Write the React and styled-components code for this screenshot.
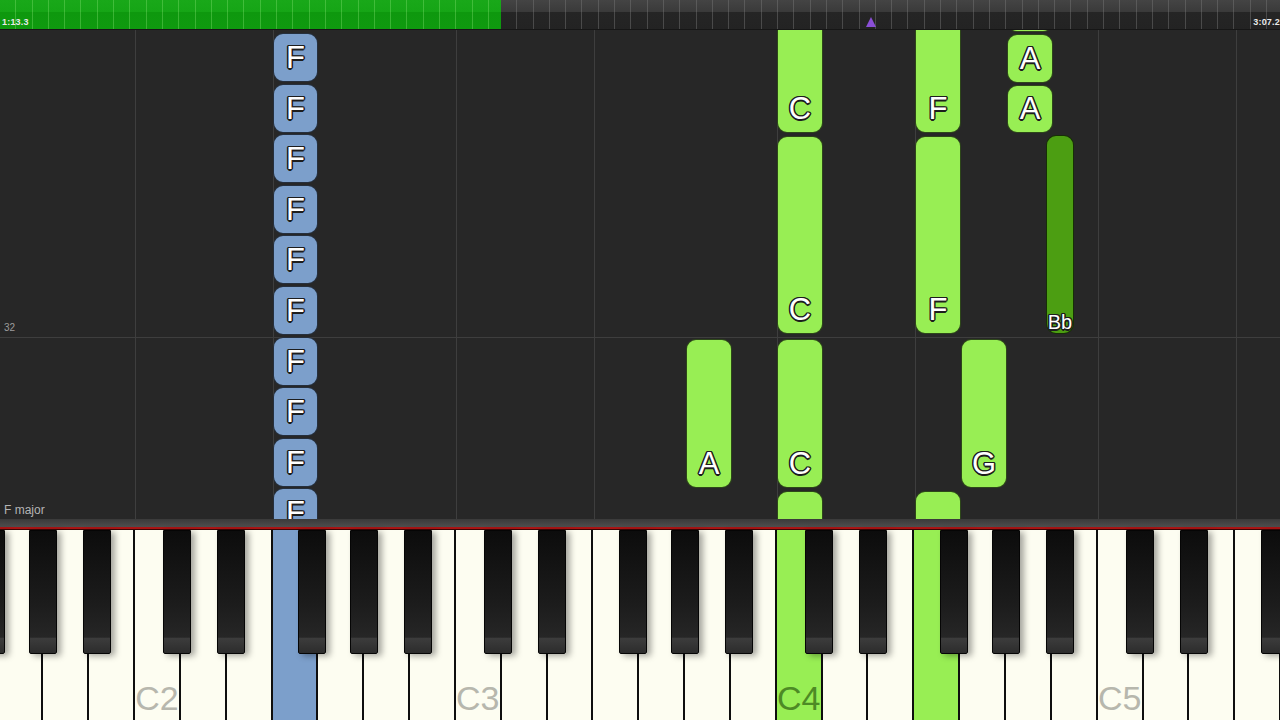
import React from 'react'
import styled, { createGlobalStyle } from 'styled-components'

const W = 321 / 7
const C2 = 135
const KEY_START = C2 - 3 * W
const octaveX = (n) => C2 + (n - 2) * 321
const BLACK_OFFSETS = [28, 82, 163, 215, 269]

const WHITE_NAMES = ['C', 'D', 'E', 'F', 'G', 'A', 'B']

const GREEN = '#98ee54'
const BLUE = '#7c9fcb'
const DARK_GREEN = '#4c9e12'

const whiteKeys = []
{
    // G1 .. F5
    let idx = 4
    let oct = 1
    for (let i = 0; i < 28; i++) {
        const name = WHITE_NAMES[idx] + oct
        whiteKeys.push(name)
        idx++
        if (idx === 7) {
            idx = 0
            oct++
        }
    }
}

const highlights = { F2: BLUE, C4: GREEN, F4: GREEN }
const labelled = { C2: 1, C3: 1, C4: 1, C5: 1 }

const blackKeys = []
for (let n = 1; n <= 5; n++) {
    BLACK_OFFSETS.forEach((o) => {
        const x = octaveX(n) + o
        if (x > -30 && x < 1280) blackKeys.push(x)
    })
}

const fStep = 50.6
const notes = [
    ...Array.from({ length: 10 }, (_, i) => ({
        x: 273, w: 45, top: 33 + i * fStep, h: 49, color: BLUE, label: 'F',
    })),
    { x: 777, w: 46, top: -20, h: 153, color: GREEN, label: 'C' },
    { x: 777, w: 46, top: 136, h: 198, color: GREEN, label: 'C' },
    { x: 777, w: 46, top: 339, h: 149, color: GREEN, label: 'C' },
    { x: 777, w: 46, top: 491, h: 80, color: GREEN },
    { x: 915, w: 46, top: -20, h: 153, color: GREEN, label: 'F' },
    { x: 915, w: 46, top: 136, h: 198, color: GREEN, label: 'F' },
    { x: 915, w: 46, top: 491, h: 80, color: GREEN },
    { x: 686, w: 46, top: 339, h: 149, color: GREEN, label: 'A' },
    { x: 961, w: 46, top: 339, h: 149, color: GREEN, label: 'G' },
    { x: 1007, w: 46, top: -20, h: 52, color: GREEN },
    { x: 1007, w: 46, top: 34, h: 49, color: GREEN, label: 'A' },
    { x: 1007, w: 46, top: 85, h: 48, color: GREEN, label: 'A' },
    { x: 1046, w: 28, top: 135, h: 199, color: DARK_GREEN, label: 'Bb', small: true },
]

const gridXs = [135, 273, 456, 594, 777, 915, 1098, 1236]

const App = () => {
    return (
        <>
            <GlobalStyle />
            <Screen>
                <TopBar>
                    <Progress />
                    <Remaining />
                    <TimeLabel>1:13.3</TimeLabel>
                    <TimeLabel $right>3:07.2</TimeLabel>
                    <Marker />
                </TopBar>
                <NoteArea>
                    {gridXs.map((x) => (
                        <VLine key={x} style={{ left: x }} />
                    ))}
                    <HLine />
                    <MeasureNum>32</MeasureNum>
                    <KeyName>F major</KeyName>
                    {notes.map((n, i) => (
                        <Note
                            key={i}
                            $color={n.color}
                            style={{ left: n.x, top: n.top - 30, width: n.w, height: n.h }}
                        >
                            {n.label && <NoteLabel $small={n.small}>{n.label}</NoteLabel>}
                        </Note>
                    ))}
                </NoteArea>
                <Divider />
                <RedLine />
                <Keyboard>
                    <WhiteRow>
                        {whiteKeys.map((k) => (
                            <WhiteKey key={k} $color={highlights[k]}>
                                {labelled[k] && (
                                    <KeyLabel $on={!!highlights[k]}>{k}</KeyLabel>
                                )}
                            </WhiteKey>
                        ))}
                    </WhiteRow>
                    {blackKeys.map((x) => (
                        <BlackKey key={x} style={{ left: x }} />
                    ))}
                </Keyboard>
            </Screen>
        </>
    )
}

export default App

const GlobalStyle = createGlobalStyle`
    html, body {
        margin: 0;
        padding: 0;
        background: #272727;
        overflow: hidden;
    }
    * {
        box-sizing: border-box;
    }
`

const Screen = styled.div`
    width: 1280px;
    height: 720px;
    display: flex;
    flex-direction: column;
    overflow: hidden;
    font-family: "Liberation Sans", Arial, sans-serif;
`

const TopBar = styled.div`
    position: relative;
    height: 30px;
    flex: none;
    display: flex;
    border-bottom: 1px solid #161616;
`

const ticks = (c) => `repeating-linear-gradient(90deg, transparent 0, transparent 15.3px, ${c} 15.3px, ${c} 16.3px)`

const Progress = styled.div`
    width: 501px;
    height: 100%;
    background:
        ${ticks('rgba(140, 230, 120, 0.35)')},
        linear-gradient(180deg, #19a819 0%, #16a516 40%, #0e980e 42%, #0f9a0f 100%);
`

const Remaining = styled.div`
    flex: 1;
    height: 100%;
    background:
        ${ticks('rgba(120, 120, 120, 0.45)')},
        linear-gradient(180deg, #444 0%, #3a3a3a 40%, #252525 42%, #232323 100%);
`

const TimeLabel = styled.span`
    position: absolute;
    bottom: 2px;
    ${(p) => (p.$right ? 'right: 0;' : 'left: 2px;')}
    font-size: 9px;
    font-weight: bold;
    color: #eaeaea;
    letter-spacing: 0.2px;
`

const Marker = styled.div`
    position: absolute;
    left: 866px;
    bottom: 2px;
    width: 0;
    height: 0;
    border-left: 5px solid transparent;
    border-right: 5px solid transparent;
    border-bottom: 10px solid #8a4fd6;
`

const NoteArea = styled.div`
    position: relative;
    height: 489px;
    flex: none;
    background: #272727;
    overflow: hidden;
`

const VLine = styled.div`
    position: absolute;
    top: 0;
    bottom: 0;
    width: 1px;
    background: #3e3e3e;
`

const HLine = styled.div`
    position: absolute;
    left: 0;
    right: 0;
    top: 307px;
    height: 1px;
    background: #3e3e3e;
`

const MeasureNum = styled.span`
    position: absolute;
    left: 4px;
    top: 292px;
    font-size: 10px;
    color: #9c9c9c;
`

const KeyName = styled.span`
    position: absolute;
    left: 4px;
    top: 473px;
    font-size: 12px;
    color: #b4b4b4;
`

const Note = styled.div`
    position: absolute;
    display: flex;
    flex-direction: column;
    justify-content: flex-end;
    align-items: center;
    padding-bottom: 6px;
    background: ${(p) => p.$color};
    border: 1px solid rgba(0, 0, 0, 0.7);
    border-radius: 10px;
`

const o = '#1d1d1d'

const NoteLabel = styled.span`
    font-size: ${(p) => (p.$small ? '20px' : '31px')};
    line-height: ${(p) => (p.$small ? '22px' : '34px')};
    color: #fff;
    text-shadow:
        -1.5px 0 ${o}, 1.5px 0 ${o}, 0 -1.5px ${o}, 0 1.5px ${o},
        -1px -1px ${o}, 1px -1px ${o}, -1px 1px ${o}, 1px 1px ${o};
    margin-bottom: ${(p) => (p.$small ? '-6px' : '0')};
`

const Divider = styled.div`
    height: 8px;
    flex: none;
    background: linear-gradient(180deg, #3a3a3a, #4e4e4e);
`

const RedLine = styled.div`
    height: 3px;
    flex: none;
    background: #a81414;
    border-bottom: 1px solid #3a0606;
`

const Keyboard = styled.div`
    position: relative;
    flex: 1;
    background: #111;
`

const WhiteRow = styled.div`
    display: flex;
    height: 100%;
    margin-left: ${KEY_START}px;
`

const WhiteKey = styled.div`
    flex: none;
    width: ${W}px;
    height: 100%;
    display: flex;
    align-items: flex-end;
    justify-content: center;
    background: ${(p) => p.$color || '#fdfdf1'};
    border-right: 2px solid #0e0e0e;
`

const KeyLabel = styled.span`
    font-size: 34px;
    line-height: 40px;
    margin-bottom: 2px;
    color: ${(p) => (p.$on ? '#4d8a25' : '#b7b7ad')};
`

const BlackKey = styled.div`
    position: absolute;
    top: 0;
    width: 28px;
    height: 124px;
    background: linear-gradient(180deg, #0c0c0c 0%, #1c1c1c 60%, #262626 87%, #3c3c3c 88%, #2c2c2c 100%);
    border: 1px solid #050505;
    border-radius: 0 0 2px 2px;
    box-shadow: 4px 2px 6px rgba(0, 0, 0, 0.35);
`
